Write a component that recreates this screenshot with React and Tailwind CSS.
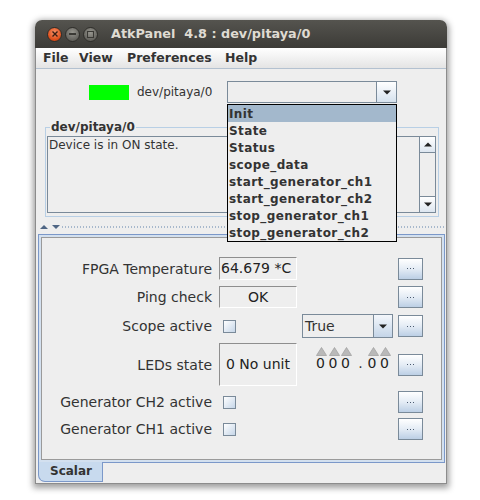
import React from 'react';

function Tri({ up = false, color = '#222' }) {
  return (
    <svg width="8" height="5" viewBox="0 0 8 5">
      {up ? <polygon points="0,4.5 8,4.5 4,0.5" fill={color} /> : <polygon points="0,0.5 8,0.5 4,4.5" fill={color} />}
    </svg>
  );
}

function MoreButton({ className = '' }) {
  return (
    <div className={`w-[25px] h-[22px] shrink-0 border border-[#7a8a99] bg-linear-to-b from-white via-[#e4ecf5] to-[#bccfe5] flex items-center justify-center gap-[2px] ${className}`}>
      <span className="w-[1px] h-[1px] bg-[#4a5a70]" />
      <span className="w-[1px] h-[1px] bg-[#4a5a70]" />
      <span className="w-[1px] h-[1px] bg-[#4a5a70]" />
    </div>
  );
}

function CheckBox() {
  return <div className="ml-[4px] w-[13px] h-[13px] border border-[#7a8a99] bg-linear-to-br from-white to-[#c6d6e8]" />;
}

function Label({ children }) {
  return <div className="w-[170px] shrink-0 text-right text-[14px] leading-[16px] text-[#333]">{children}</div>;
}

function WheelDigit({ ch }) {
  if (ch === '.') {
    return <div className="w-[14px] pt-[9px] text-[14px] leading-[14px] text-center">.</div>;
  }
  return (
    <div className="w-[12.5px] flex flex-col items-start">
      <svg width="11" height="9" viewBox="0 0 11 9">
        <polygon points="0.5,8.5 10.5,8.5 5.5,0.5" fill="#b9b9b9" stroke="#a2a2a2" strokeWidth="0.8" />
      </svg>
      <span className="text-[14px] leading-[14px] text-[#222]">{ch}</span>
    </div>
  );
}

const commands = [
  'Init',
  'State',
  'Status',
  'scope_data',
  'start_generator_ch1',
  'start_generator_ch2',
  'stop_generator_ch1',
  'stop_generator_ch2',
];

export default function App() {
  return (
    <div className="w-[480px] h-[500px] bg-white pt-[20px] font-['DejaVu_Sans',Verdana,sans-serif] text-[#333] overflow-hidden">
      <div className="ml-[35px] w-[412px] rounded-t-[7px] shadow-[0_2px_6px_2px_rgba(0,0,0,0.38)]">
        {/* title bar */}
        <div className="h-[28px] rounded-t-[7px] bg-linear-to-b from-[#55544f] to-[#3c3b37] flex items-center pl-[12px]">
          <div className="w-[15px] h-[15px] rounded-full bg-[radial-gradient(circle_at_50%_35%,#f7936a,#e0501c_65%,#b33a10)] border border-[#2f2e2a] flex items-center justify-center">
            <svg width="6" height="6" viewBox="0 0 6 6">
              <path d="M0.5 0.5 L5.5 5.5 M5.5 0.5 L0.5 5.5" stroke="#3a1d12" strokeWidth="1.4" />
            </svg>
          </div>
          <div className="ml-[3px] w-[15px] h-[15px] rounded-full bg-[radial-gradient(circle_at_50%_35%,#97968f,#64635e_70%,#54534e)] border border-[#2f2e2a] flex items-center justify-center">
            <div className="w-[7px] h-[2px] bg-[#3a3935]" />
          </div>
          <div className="ml-[3px] w-[15px] h-[15px] rounded-full bg-[radial-gradient(circle_at_50%_35%,#97968f,#64635e_70%,#54534e)] border border-[#2f2e2a] flex items-center justify-center">
            <div className="w-[7px] h-[7px] border-[1.5px] border-[#3a3935]" />
          </div>
          <span className="ml-[13px] text-[12.8px] font-bold text-[#dfdbd2] whitespace-pre">AtkPanel  4.8 : dev/pitaya/0</span>
        </div>

        <div className="border-x border-b border-[#8c8c8c] bg-[#eeeeee] pb-[1px]">
          {/* menu bar */}
          <div className="h-[21px] bg-linear-to-b from-white to-[#e4e4e4] border-b border-[#b3c1d0] flex items-center pl-[7px] text-[12.5px] font-bold text-[#333]">
            <span className="w-[36px]">File</span>
            <span className="w-[48px]">View</span>
            <span className="w-[98px]">Preferences</span>
            <span>Help</span>
          </div>

          {/* device row */}
          <div className="mt-[12px] h-[22px] flex items-center">
            <div className="ml-[53px] w-[40px] h-[15px] bg-[#00ff00]" />
            <div className="ml-[8px] w-[90px] text-[12px] text-[#333]">dev/pitaya/0</div>
            <div className="relative w-[170px] h-[22px] border border-[#7a8a99] bg-[#eeeeee] flex">
              <div className="flex-1" />
              <div className="w-[20px] border-l border-[#7a8a99] bg-linear-to-b from-white to-[#d6e2ee] flex items-center justify-center">
                <Tri />
              </div>
              <div className="absolute left-[-1px] top-[22px] w-[170px] h-[138px] border border-black bg-[#eeeeee] z-10">
                {commands.map((c, i) => (
                  <div
                    key={c}
                    className={`h-[17px] pl-[1px] text-[12px] leading-[18px] font-bold tracking-[0.4px] text-[#333] ${i === 0 ? 'bg-[#a3b8cc]' : ''}`}
                  >
                    {c}
                  </div>
                ))}
              </div>
            </div>
          </div>

          {/* titled panel */}
          <fieldset className="mt-[17px] ml-[9px] w-[394px] border border-[#b8cfe5] pl-[1px] pr-[2px] pt-[2px] pb-[3px]">
            <legend className="ml-[3px] px-[1px] text-[12px] leading-[14px] font-bold text-[#333]">dev/pitaya/0</legend>
            <div className="h-[77px] border border-[#7a8a99] bg-[#eeeeee] flex">
              <div className="flex-1 pl-[1px] pt-[1px] text-[12px] leading-[14px] text-[#333]">Device is in ON state.</div>
              <div className="w-[16px] border-l border-[#7a8a99] flex flex-col">
                <div className="h-[16px] border-b border-[#7a8a99] bg-linear-to-b from-white to-[#dde6f0] flex items-center justify-center">
                  <Tri up />
                </div>
                <div className="flex-1 bg-[#eeeeee]" />
                <div className="h-[16px] border-t border-[#7a8a99] bg-linear-to-b from-white to-[#dde6f0] flex items-center justify-center">
                  <Tri />
                </div>
              </div>
            </div>
          </fieldset>

          {/* split divider */}
          <div className="h-[17px] flex items-end pb-[5px] pl-[4px]">
            <svg width="8" height="4" viewBox="0 0 8 4">
              <polygon points="0,4 8,4 4,0" fill="#4f6684" />
            </svg>
            <svg width="8" height="4" viewBox="0 0 8 4" className="ml-[4px]">
              <polygon points="0,0 8,0 4,4" fill="#4f6684" />
            </svg>
            <div className="ml-[2px] mb-[1px] flex-1 mr-[2px] h-[2px] bg-[repeating-linear-gradient(90deg,#a7b8cc_0_1px,transparent_1px_3px)]" />
          </div>

          {/* tabbed pane */}
          <div className="ml-[2px] mr-[1px] border-x border-t border-[#7b98c9] bg-[#d3e0ef] p-[2px]">
            <div className="h-[223px] border border-[#9a9a9a] bg-[#eeeeee] flex flex-col">
              <div className="mt-[19px] h-[23px] flex items-center">
                <Label>FPGA Temperature</Label>
                <div className="ml-[7px] w-[78px] h-full border border-[#8e8e8e] border-b-white border-r-white pl-[1px] text-[14px] leading-[21px] text-[#222]">64.679 *C</div>
                <div className="w-[96px]" />
                <MoreButton className="ml-[5px]" />
              </div>

              <div className="mt-[6px] h-[22px] flex items-center">
                <Label>Ping check</Label>
                <div className="ml-[7px] w-[78px] h-full border border-[#8e8e8e] border-b-white border-r-white text-center text-[14px] leading-[20px] text-[#222]">OK</div>
                <div className="w-[96px]" />
                <MoreButton className="ml-[5px]" />
              </div>

              <div className="mt-[6px] h-[24px] flex items-center">
                <Label>Scope active</Label>
                <div className="ml-[7px] w-[78px] flex items-center">
                  <CheckBox />
                </div>
                <div className="w-[96px] h-full">
                  <div className="ml-[5px] w-[91px] h-full border border-[#7a8a99] bg-[#eeeeee] flex">
                    <div className="flex-1 pl-[2px] text-[14px] leading-[22px] text-[#333]">True</div>
                    <div className="w-[19px] border-l border-[#7a8a99] bg-linear-to-b from-[#f4f7fb] to-[#c4d5e8] flex items-center justify-center">
                      <Tri />
                    </div>
                  </div>
                </div>
                <MoreButton className="ml-[5px]" />
              </div>

              <div className="mt-[5px] h-[43px] flex items-center">
                <Label>LEDs state</Label>
                <div className="ml-[7px] w-[78px] h-full border border-[#8e8e8e] border-b-white border-r-white flex items-center justify-center text-[14px] text-[#222]">0 No unit</div>
                <div className="w-[96px] h-full">
                  <div className="ml-[19px] mt-[4px] flex items-start">
                    {['0', '0', '0', '.', '0', '0'].map((ch, i) => (
                      <WheelDigit key={i} ch={ch} />
                    ))}
                  </div>
                </div>
                <MoreButton className="ml-[5px]" />
              </div>

              <div className="mt-[5px] h-[22px] flex items-center">
                <Label>Generator CH2 active</Label>
                <div className="ml-[7px] w-[78px] flex items-center">
                  <CheckBox />
                </div>
                <div className="w-[96px]" />
                <MoreButton className="ml-[5px]" />
              </div>

              <div className="mt-[5px] h-[22px] flex items-center">
                <Label>Generator CH1 active</Label>
                <div className="ml-[7px] w-[78px] flex items-center">
                  <CheckBox />
                </div>
                <div className="w-[96px]" />
                <MoreButton className="ml-[5px]" />
              </div>
            </div>
          </div>
          <div className="ml-[2px] mr-[1px] h-[20px] flex">
            <div className="w-[65px] border-x border-b border-[#7b98c9] rounded-bl-[7px] bg-[#c8daee] pl-[11px] text-[12px] leading-[19px] font-bold text-[#333]">Scalar</div>
            <div className="flex-1 border-t border-[#7b98c9]" />
          </div>
        </div>
      </div>
    </div>
  );
}
